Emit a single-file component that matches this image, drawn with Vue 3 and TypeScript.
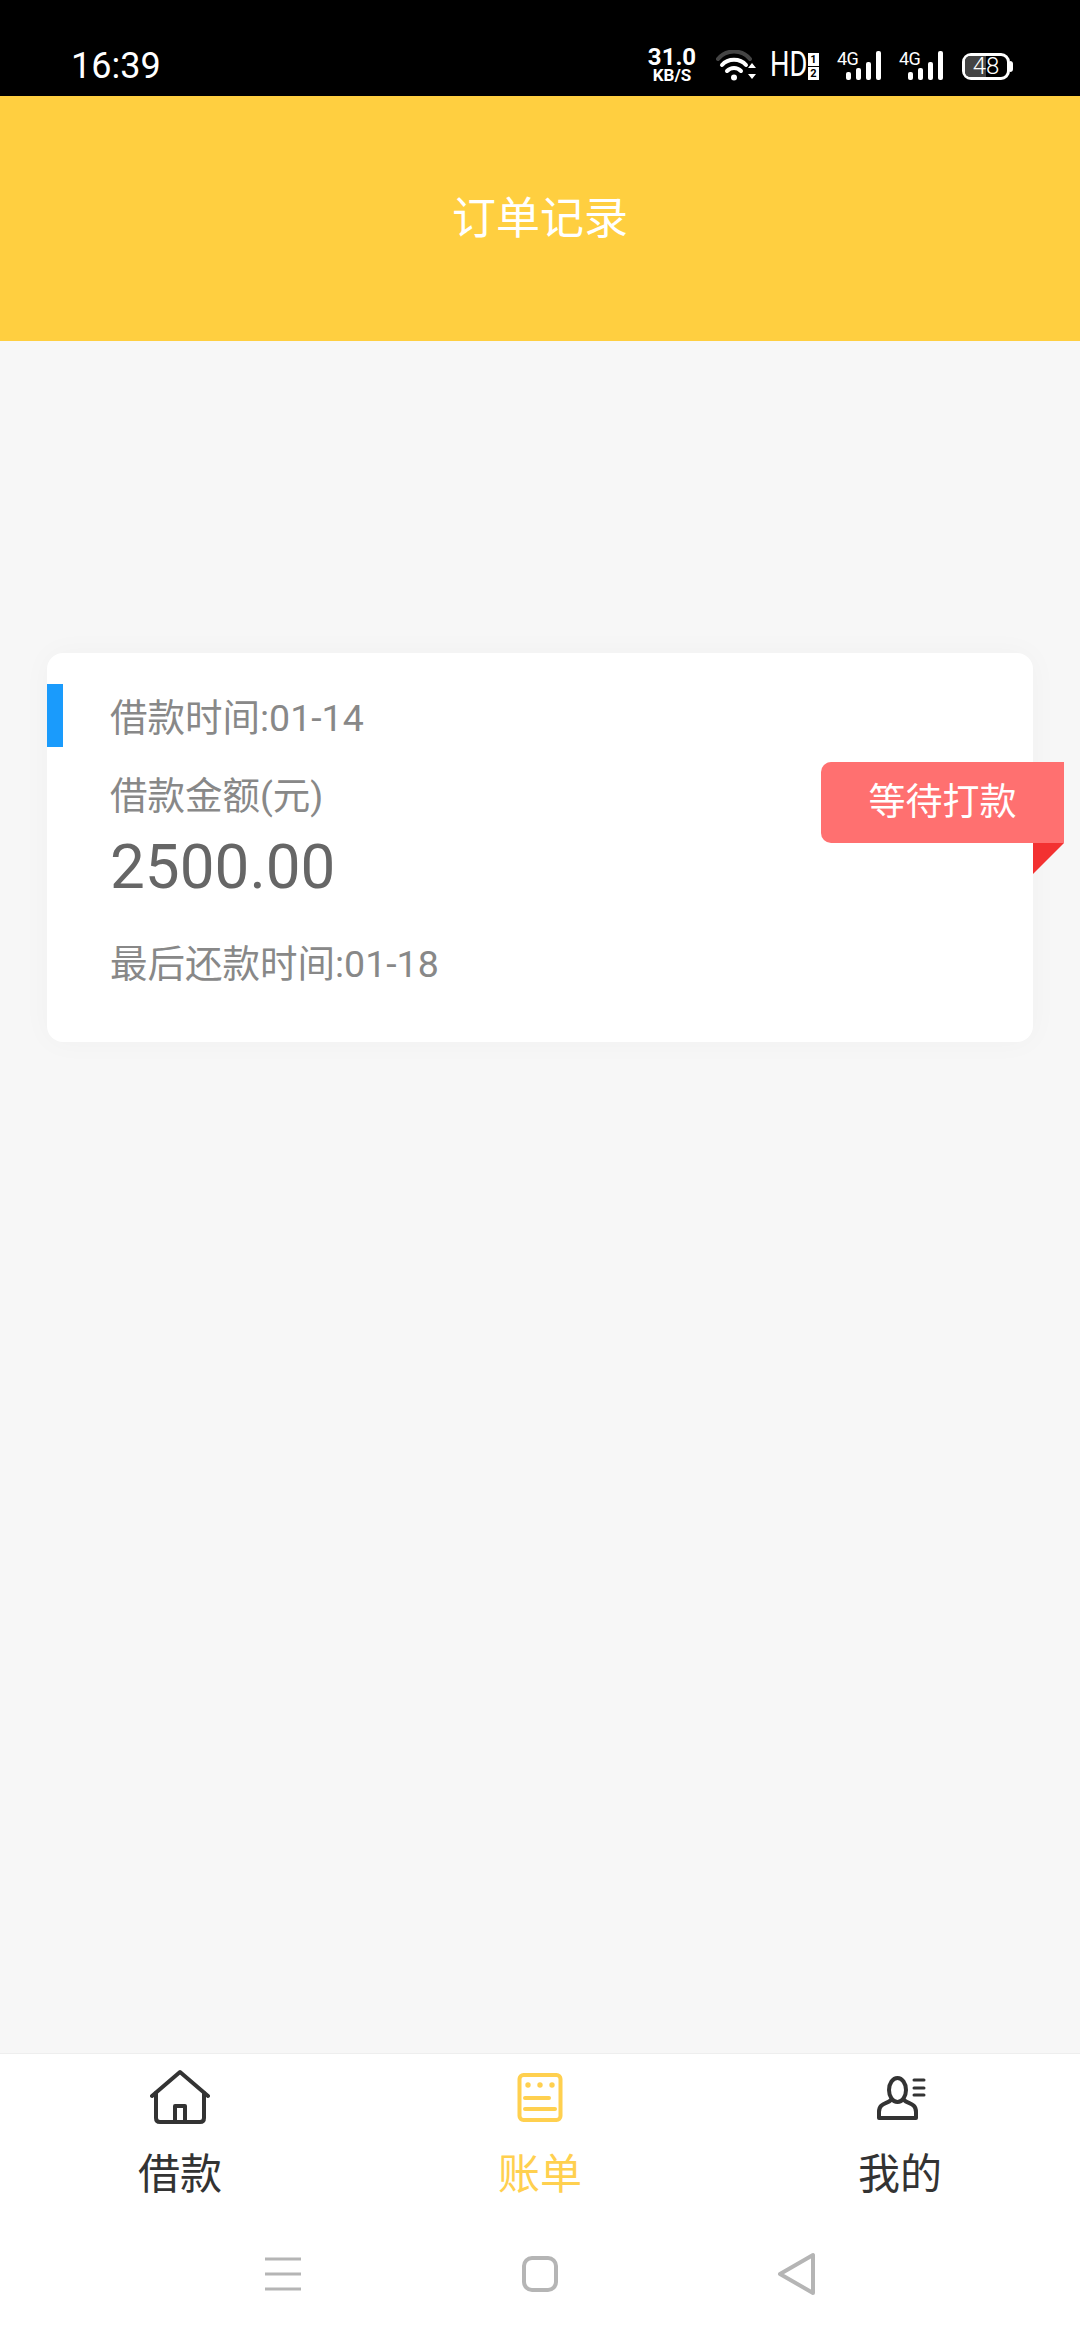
<script setup lang="ts">
const tabs = [
  { key: 'home', label: '借款', active: false },
  { key: 'bill', label: '账单', active: true },
  { key: 'mine', label: '我的', active: false },
]

const signals = [0, 1]
const bars = [8, 12, 18, 29]
</script>

<template>
  <div class="page">
    <!-- Status bar -->
    <div class="status-bar">
      <span class="clock">16:39</span>
      <div class="status-right">
        <div class="speed">
          <span class="speed-num">31.0</span>
          <span class="speed-unit">KB/S</span>
        </div>
        <svg class="wifi" width="40" height="32" viewBox="0 0 40 32" fill="none">
          <path d="M2 9 C10 -1 26 -1 34 9" stroke="#444" stroke-width="4" stroke-linecap="round" />
          <path d="M6 15 C12 8 24 8 30 15" stroke="#fff" stroke-width="4" stroke-linecap="round" />
          <path d="M11 21 C15 17 21 17 25 21" stroke="#fff" stroke-width="4" stroke-linecap="round" />
          <circle cx="18" cy="27.5" r="3" fill="#fff" />
          <path d="M32 18 L36 13 L40 18 Z M32 24 L36 29 L40 24 Z" fill="#fff" />
        </svg>
        <span class="hd">HD</span>
        <div class="sim-box">
          <span class="sim-top">1</span>
          <span class="sim-bottom">2</span>
        </div>
        <div v-for="s in signals" :key="s" class="signal">
          <span class="signal-type">4G</span>
          <div class="signal-bars">
            <i v-for="h in bars" :key="h" :style="{ height: h + 'px' }" />
          </div>
        </div>
        <div class="battery">
          <div class="battery-fill" />
          <span class="battery-num">48</span>
        </div>
      </div>
    </div>

    <!-- Header -->
    <div class="header">订单记录</div>

    <!-- Order list -->
    <div class="content">
      <div class="card">
        <div class="card-mark" />
        <div class="card-row">借款时间:01-14</div>
        <div class="card-row amount-label">借款金额(元)</div>
        <div class="amount">2500.00</div>
        <div class="card-row due">最后还款时间:01-18</div>
        <div class="badge">
          等待打款
          <div class="badge-fold" />
        </div>
      </div>
    </div>

    <!-- Tabs -->
    <div class="tabbar">
      <div v-for="tab in tabs" :key="tab.key" class="tab" :class="{ active: tab.active }">
        <svg width="60" height="60" viewBox="0 0 60 60" fill="none" stroke="currentColor" stroke-width="4" stroke-linecap="round" stroke-linejoin="round">
          <template v-if="tab.key === 'home'">
            <path d="M2 29 L30 5 L58 29" />
            <path d="M6 26 V51 Q6 55 10 55 H50 Q54 55 54 51 V26" />
            <path d="M25 55 V39 H35 V55" />
          </template>
          <template v-else-if="tab.key === 'bill'">
            <rect x="9.5" y="8" width="41" height="45" rx="4" />
            <circle cx="18" cy="18" r="2.7" fill="currentColor" stroke="none" />
            <circle cx="30" cy="18" r="2.7" fill="currentColor" stroke="none" />
            <circle cx="42" cy="18" r="2.7" fill="currentColor" stroke="none" />
            <path d="M15 31 H39 M15 42 H45" />
          </template>
          <template v-else>
            <ellipse cx="27.5" cy="23" rx="8.5" ry="12" />
            <path d="M21 33 C17 37 9 36 9 45 V51 H46 V45 C46 36 38 37 34 33" />
            <path d="M44 13 H54 M44 21 H54 M44 28 H54" stroke-width="3" />
          </template>
        </svg>
        <span class="tab-label">{{ tab.label }}</span>
      </div>
    </div>

    <!-- System nav -->
    <div class="nav">
      <svg width="60" height="60" viewBox="0 0 60 60" fill="none" stroke="#b5b5b5" stroke-width="3">
        <path d="M12 15 H48 M12 30 H48 M12 45 H48" />
      </svg>
      <svg width="60" height="60" viewBox="0 0 60 60" fill="none" stroke="#b5b5b5" stroke-width="4">
        <rect x="14" y="14" width="32" height="32" rx="8" />
      </svg>
      <svg width="60" height="60" viewBox="0 0 60 60" fill="none" stroke="#b5b5b5" stroke-width="4" stroke-linejoin="round">
        <path d="M13 30 L46 11 V49 Z" />
      </svg>
    </div>
  </div>
</template>

<style>
body {
  margin: 0;
}
</style>

<style scoped>
.page {
  display: flex;
  flex-direction: column;
  width: 1080px;
  height: 2340px;
  background: #f7f7f7;
  font-family: Roboto, "Noto Sans CJK SC", sans-serif;
  overflow: hidden;
}

.status-bar {
  display: flex;
  align-items: flex-end;
  justify-content: space-between;
  height: 96px;
  padding: 0 70px 13px 71px;
  box-sizing: border-box;
  background: #000;
  color: #fff;
}

.clock {
  font-size: 36px;
  line-height: 40px;
  margin-bottom: -3px;
}

.status-right {
  display: flex;
  align-items: flex-end;
}

.speed {
  display: flex;
  flex-direction: column;
  align-items: center;
  width: 48px;
  font-weight: 700;
}

.speed-num {
  font-size: 24px;
  line-height: 21px;
}

.speed-unit {
  font-size: 17px;
  line-height: 15px;
}

.wifi {
  margin-left: 20px;
  margin-bottom: 1px;
}

.hd {
  width: 36px;
  margin-left: 14px;
  margin-bottom: 3px;
  font-size: 35px;
  line-height: 30px;
  white-space: nowrap;
  transform: scaleX(0.78);
  transform-origin: left center;
}

.sim-box {
  display: flex;
  flex-direction: column;
  gap: 1px;
  width: 11px;
  margin-left: 2px;
  margin-bottom: 3px;
}

.sim-top,
.sim-bottom {
  height: 13px;
  font-size: 11px;
  line-height: 13px;
  text-align: center;
  font-weight: 700;
  background: #fff;
  color: #000;
}

.signal {
  position: relative;
  display: flex;
  justify-content: flex-end;
  width: 44px;
  height: 29px;
  margin-left: 18px;
  margin-bottom: 3px;
}

.signal-type {
  position: absolute;
  left: 0;
  top: 0;
  font-size: 18px;
  line-height: 15px;
  letter-spacing: -0.5px;
}

.signal-bars {
  display: flex;
  align-items: flex-end;
  gap: 5px;
}

.signal-bars i {
  display: block;
  width: 5px;
  background: #fff;
  border-radius: 2px;
}

.battery {
  position: relative;
  width: 48px;
  height: 27px;
  margin-left: 19px;
  margin-bottom: 3px;
  box-sizing: border-box;
  border: 3px solid #fff;
  border-radius: 9px;
}

.battery::after {
  content: "";
  position: absolute;
  right: -6px;
  top: 5px;
  width: 3px;
  height: 11px;
  background: #fff;
  border-radius: 0 3px 3px 0;
}

.battery-fill {
  width: 50%;
  height: 100%;
  background: #444;
  border-radius: 5px 0 0 5px;
}

.battery-num {
  position: absolute;
  inset: 0;
  font-size: 24px;
  line-height: 21px;
  text-align: center;
  font-weight: 300;
}

.header {
  height: 245px;
  line-height: 247px;
  text-align: center;
  font-size: 44px;
  color: #fff;
  background: #ffcf40;
  flex-shrink: 0;
}

.content {
  flex: 1;
  padding: 312px 47px 0;
}

.card {
  position: relative;
  padding: 40px 0 53px 63px;
  background: #fff;
  border-radius: 16px;
  box-shadow: 0 0 30px rgba(0, 0, 0, 0.03);
}

.card-mark {
  position: absolute;
  left: 0;
  top: 31px;
  width: 16px;
  height: 63px;
  background: #1a9bfc;
}

.card-row {
  font-size: 37.5px;
  line-height: 50px;
  color: #888;
}

.amount-label {
  margin-top: 28px;
}

.amount {
  margin-top: 6px;
  font-size: 62px;
  line-height: 80px;
  color: #666;
}

.due {
  margin-top: 32px;
}

.badge {
  position: absolute;
  top: 109px;
  right: -31px;
  width: 243px;
  height: 81px;
  line-height: 81px;
  text-align: center;
  font-size: 37px;
  color: #fff;
  background: #ff7070;
  border-radius: 10px 0 0 10px;
}

.badge-fold {
  position: absolute;
  top: 100%;
  right: 0;
  width: 31px;
  height: 31px;
  background: #f33131;
  clip-path: polygon(0 0, 100% 0, 0 100%);
}

.tabbar {
  display: flex;
  height: 167px;
  box-sizing: border-box;
  padding-top: 13px;
  background: #fff;
  border-top: 1px solid #eee;
}

.tab {
  flex: 1;
  display: flex;
  flex-direction: column;
  align-items: center;
  color: #333;
}

.tab.active {
  color: #ffd04f;
}

.tab-label {
  margin-top: 23px;
  font-size: 42px;
  line-height: 50px;
}

.nav {
  display: flex;
  justify-content: center;
  gap: 197px;
  height: 120px;
  padding-top: 24px;
  box-sizing: border-box;
  background: #fff;
}
</style>
